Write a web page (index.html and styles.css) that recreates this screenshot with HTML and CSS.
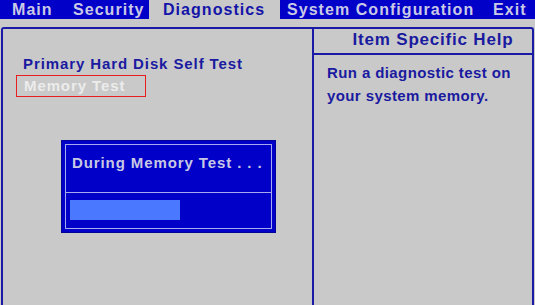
FILE: index.html
```html
<!DOCTYPE html>
<html>
<head>
<meta charset="utf-8">
<link rel="stylesheet" href="styles.css">
</head>
<body>
<nav class="menubar">
  <span class="tab tab-main">Main</span>
  <span class="tab tab-security">Security</span>
  <span class="tab tab-diag active">Diagnostics</span>
  <span class="tab tab-sys">System Configuration</span>
  <span class="tab tab-exit">Exit</span>
</nav>
<main class="panel">
  <section class="left">
    <div class="item">Primary Hard Disk Self Test</div>
    <div class="item selected">Memory Test</div>
    <div class="dialog">
      <div class="dialog-inner">
        <div class="dialog-title">During Memory Test . . .</div>
        <div class="dialog-body">
          <div class="progress"></div>
        </div>
      </div>
    </div>
  </section>
  <section class="right">
    <div class="help-head">Item Specific Help</div>
    <div class="help-text">Run a diagnostic test on your system memory.</div>
  </section>
</main>
</body>
</html>
```
FILE: styles.css
```css
html, body {
  margin: 0;
  padding: 0;
  background: #c9c9c9;
  overflow: hidden;
  height: 305px;
}
body {
  font-family: "Liberation Sans", Arial, sans-serif;
  font-weight: 700;
}
.menubar {
  display: flex;
  height: 19px;
  background: #0000c8;
  color: #c9c9e6;
  font-size: 16px;
  line-height: 19px;
  letter-spacing: 1.05px;
}
.tab {
  display: block;
  white-space: nowrap;
}
.tab-main { padding-left: 12px; width: 61px; }
.tab-security { width: 76px; }
.tab-diag { padding-left: 14px; width: 117px; }
.tab-sys { padding-left: 7px; width: 199px; }
.tab-exit { padding-left: 7px; }
.tab.active {
  background: #c9c9c9;
  color: #1414a8;
}
.panel {
  margin: 8px 1px 0 1px;
  height: 300px;
  border: 2px solid #1a1aa6;
  border-bottom: none;
  border-radius: 3px 3px 0 0;
  display: grid;
  grid-template-columns: 309px 1fr;
}
.left {
  padding: 25px 0 0 0;
}
.item {
  font-size: 15px;
  line-height: 20px;
  color: #1a1aa0;
  padding-left: 20px;
  letter-spacing: 0.9px;
}
.item.selected {
  color: #ececec;
  margin: 1px 0 0 13px;
  padding: 0 0 0 7px;
  width: 121px;
  border: 1px solid #e81e1e;
  line-height: 20px;
}
.dialog {
  margin: 43px 0 0 58px;
  width: 215px;
  height: 93px;
  background: #0000c8;
  border: 1px solid #00009a;
  padding: 3px;
  box-sizing: border-box;
}
.dialog-inner {
  border: 1px solid #a8a8ee;
  height: 100%;
  box-sizing: border-box;
  display: flex;
  flex-direction: column;
}
.dialog-title {
  height: 48px;
  box-sizing: border-box;
  border-bottom: 1px solid #a8a8ee;
  color: #c8c8e4;
  font-size: 15px;
  line-height: 35px;
  padding-left: 6px;
  letter-spacing: 0.9px;
}
.dialog-body {
  padding: 7px 0 0 4px;
}
.progress {
  width: 110px;
  height: 20px;
  background: #4a78ff;
}
.right {
  border-left: 2px solid #1a1aa6;
}
.help-head {
  height: 24px;
  border-bottom: 2px solid #1a1aa6;
  color: #1a1aa0;
  font-size: 17px;
  line-height: 22px;
  text-align: center;
  padding-left: 20px;
  letter-spacing: 0.8px;
}
.help-text {
  color: #1a1aa0;
  font-size: 15px;
  line-height: 23px;
  padding: 6px 6px 0 13px;
  letter-spacing: 0.4px;
}
```
